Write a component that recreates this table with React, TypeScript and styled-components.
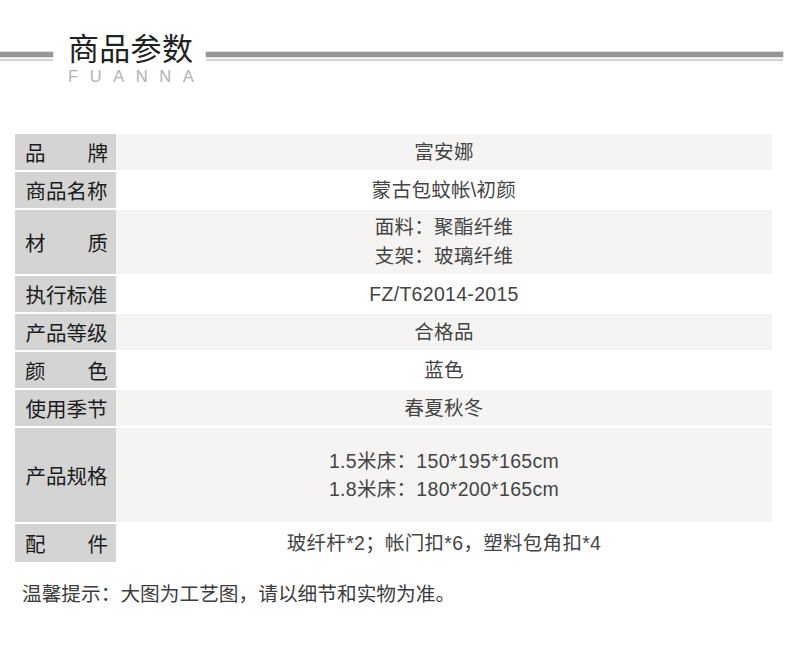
import React from "react";
import styled, { createGlobalStyle } from "styled-components";

const Global = createGlobalStyle`
  html, body { margin: 0; padding: 0; background: #fff; }
  body { font-family: "Liberation Sans", "Noto Sans CJK SC", sans-serif; }
`;

const Page = styled.div`
  width: 790px;
  height: 653px;
  background: #fff;
  overflow: hidden;
`;

const Header = styled.header`
  display: flex;
  align-items: flex-start;
  padding-top: 30px;
`;

const Rule = styled.div<{ $w?: number }>`
  ${(p) => (p.$w ? `width: ${p.$w}px;` : "flex: 1;")}
  margin-top: 22px;
  height: 5px;
  background: #969696;
  box-shadow: 0 0 0 0.5px #c4c4c4;
  &::after {
    content: "";
    display: block;
    margin-top: 7px;
    height: 2px;
    background: #d2d2d2;
  }
`;

const TitleBlock = styled.div`
  margin: 0 12px 0 15px;
  display: flex;
  flex-direction: column;
`;

const Title = styled.h1`
  margin: 0;
  font-family: "Noto Sans CJK SC", sans-serif;
  font-weight: 400;
  font-size: 31px;
  line-height: 34px;
  color: #222;
  letter-spacing: 0.3px;
`;

const Sub = styled.div`
  margin-top: 4px;
  font-family: "Liberation Sans", sans-serif;
  font-size: 16.5px;
  line-height: 16px;
  letter-spacing: 11.6px;
  color: #b3b3b3;
  white-space: nowrap;
  width: 126px;
`;

const Table = styled.div`
  margin: 0 18px 0 15px;
  margin-top: 50px;
  display: grid;
  grid-template-columns: 101px 1fr;
  row-gap: 2px;
`;

const Label = styled.div<{ $h: number; $spread?: boolean }>`
  height: ${(p) => p.$h}px;
  background: #d4d4d4;
  display: flex;
  align-items: center;
  padding: 0 8px 0 10px;
  font-family: "Noto Sans CJK SC", sans-serif;
  font-size: 20.5px;
  color: #1c1c1c;
  & > span {
    flex: 1;
    display: flex;
    justify-content: ${(p) => (p.$spread ? "space-between" : "center")};
    white-space: nowrap;
  }
`;

const Value = styled.div<{ $h: number; $shade?: boolean }>`
  height: ${(p) => p.$h}px;
  background: ${(p) => (p.$shade ? "#f5f4f3" : "#fff")};
  display: flex;
  flex-direction: column;
  align-items: center;
  justify-content: center;
  font-size: 19.5px;
  letter-spacing: 0.3px;
  color: #444;
  white-space: nowrap;
`;

const Line = styled.div<{ $lh?: number }>`
  line-height: ${(p) => p.$lh ?? 28}px;
`;

const Note = styled.p`
  margin: 19px 0 0;
  padding-left: 22px;
  font-family: "Noto Sans CJK SC", sans-serif;
  font-size: 19.7px;
  line-height: 24px;
  color: #3c3c3c;
`;

type Row = {
  label: string;
  spread?: boolean;
  h: number;
  shade?: boolean;
  lines: string[];
  lh?: number;
};

const rows: Row[] = [
  { label: "品牌", spread: true, h: 36, shade: true, lines: ["富安娜"] },
  { label: "商品名称", h: 36, lines: ["蒙古包蚊帐\\初颜"] },
  { label: "材质", spread: true, h: 64, shade: true, lines: ["面料：聚酯纤维", "支架：玻璃纤维"], lh: 29 },
  { label: "执行标准", h: 36, lines: ["FZ/T62014-2015"] },
  { label: "产品等级", h: 36, shade: true, lines: ["合格品"] },
  { label: "颜色", spread: true, h: 36, lines: ["蓝色"] },
  { label: "使用季节", h: 36, shade: true, lines: ["春夏秋冬"] },
  { label: "产品规格", h: 94, shade: true, lines: ["1.5米床：150*195*165cm", "1.8米床：180*200*165cm"], lh: 28 },
  { label: "配件", spread: true, h: 38, lines: ["玻纤杆*2；帐门扣*6，塑料包角扣*4"] },
];

export default function App() {
  return (
    <Page>
      <Global />
      <Header>
        <Rule $w={53} />
        <TitleBlock>
          <Title>商品参数</Title>
          <Sub>FUANNA</Sub>
        </TitleBlock>
        <Rule style={{ marginRight: 7 }} />
      </Header>
      <Table>
        {rows.map((r) => (
          <React.Fragment key={r.label}>
            <Label $h={r.h} $spread={r.spread}>
              <span>
                {r.label.split("").map((c, i) => (
                  <span key={i}>{c}</span>
                ))}
              </span>
            </Label>
            <Value $h={r.h} $shade={r.shade}>
              {r.lines.map((l) => (
                <Line key={l} $lh={r.lh}>
                  {l}
                </Line>
              ))}
            </Value>
          </React.Fragment>
        ))}
      </Table>
      <Note>温馨提示：大图为工艺图，请以细节和实物为准。</Note>
    </Page>
  );
}
